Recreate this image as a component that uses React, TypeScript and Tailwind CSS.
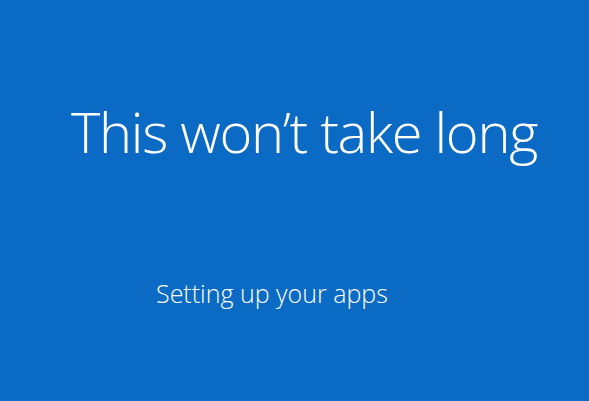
import React from 'react';

export default function App() {
    return (
        <div className="w-[589px] h-[401px] bg-[#0b6bc4] text-white overflow-hidden flex flex-col" style={{ fontFamily: '"Open Sans", "Noto Sans", sans-serif' }}>
            {/* Headline */}
            <h1 className="mt-[95px] ml-[71px] text-[56px] leading-[72px] font-light tracking-[-1.3px] whitespace-nowrap">
                This won’t take long
            </h1>
            {/* Status line */}
            <p className="mt-[110px] ml-[156px] text-[25px] leading-[32px] font-light whitespace-nowrap">
                Setting up your apps
            </p>
        </div>
    );
}
